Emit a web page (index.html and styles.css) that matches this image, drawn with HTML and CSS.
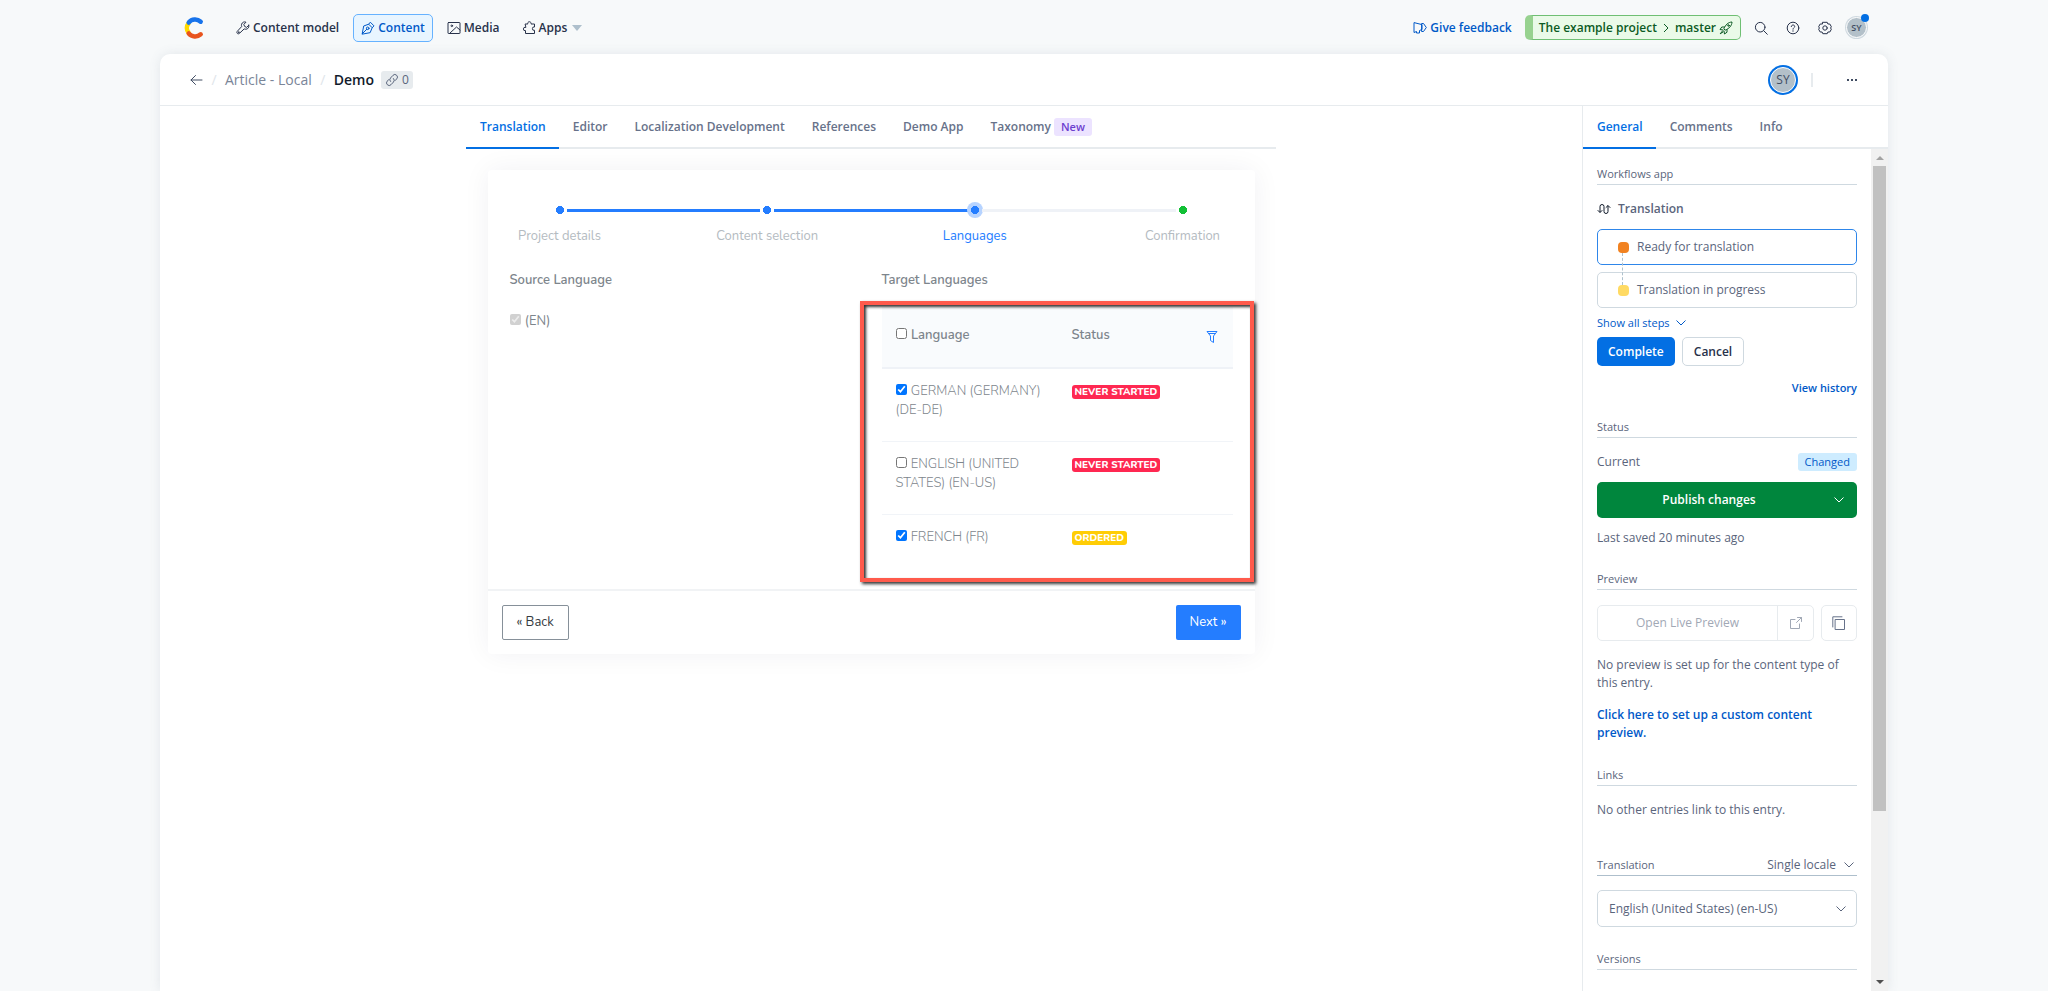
FILE: index.html
```html
<!DOCTYPE html>
<html lang="en">

<head>
    <meta charset="UTF-8">
    <meta name="viewport" content="width=device-width, initial-scale=1.0">
    <title>Demo - Content</title>
    <link rel="stylesheet" href="styles.css">
</head>

<body>
    <header class="topbar">
        <a class="logo" href="#" aria-label="Home">
            <svg width="22" height="24" viewBox="0 0 22 24" fill="none" stroke-width="4.500" stroke-linecap="round">
                <path d="M4.500 7.500a7 7 0 0 0 0 9" stroke="#ffda00" />
                <path d="M4.700 6.500a8.500 8.500 0 0 1 12-.8" stroke="#1773eb" />
                <path d="M4.700 17.500a8.500 8.500 0 0 0 12 .8" stroke="#e8541e" />
            </svg>
        </a>
        <nav class="main-nav">
            <a href="#">
                <svg class="icon" viewBox="0 0 14 14"><path d="M12.800 4.200 10.600 6.400 8.600 5.400 7.800 3.400 10 1.200C8.200.5 6.200 1.200 5.600 3.200c-.3.900-.2 1.700.1 2.300L1.400 10.200c-.7.800-.7 1.600-.1 2.200s1.500.6 2.200-.1l4.700-4.400c2.600 1.100 5.400-.8 4.600-3.700z" /><circle cx="2.700" cy="11.200" r=".4" /></svg>
                Content model
            </a>
            <a class="active" href="#">
                <svg class="icon" viewBox="0 0 14 14"><path d="M1.200 12.800 2.700 5l5-1.800 3.500 3.500L9.300 11.300zM1.200 12.800 5.800 8.200M7.700 3.200 9.300 1.200l3.700 3.700-1.800 1.800" /><circle cx="6.700" cy="7.300" r="1.300" /></svg>
                Content
            </a>
            <a href="#">
                <svg class="icon" viewBox="0 0 14 14"><rect x="1" y="1.500" width="12" height="11" rx=".5" /><path d="M2.500 12.500 9.500 6l3.500 3" /><circle cx="4.800" cy="4.800" r=".8" /></svg>
                Media
            </a>
            <a href="#">
                <svg class="icon" viewBox="0 0 14 14"><path d="M3.500 3h2.300a1.700 1.700 0 1 1 3.200 0h3.500v3a1.700 1.700 0 1 0 0 3.300v3.200h-9V9.600a1.700 1.700 0 1 1 0-3.300z" /></svg>
                Apps
                <svg class="caret" viewBox="0 0 10 6"><path d="M0 0h10L5 6z" /></svg>
            </a>
        </nav>
        <div class="top-actions">
            <a class="feedback" href="#">
                <svg class="icon" viewBox="0 0 14 14"><path d="M1 2v9.500l2.500-1V12h3V9.500l2.500-1V4zM9 2.500h1.500l2.800 4-2.800 4H9z" /></svg>
                Give feedback
            </a>
            <button class="project" type="button">
                <span>The example project</span>
                <svg class="chevron-right" viewBox="0 0 6 10"><path d="m1 1 4 4-4 4" /></svg>
                <span class="branch">
                    master
                    <svg class="icon" viewBox="0 0 14 14"><path d="M5 7.500C6.500 4 9 1.200 13 1c-.2 4-3 6.500-6.500 8zM5.500 6H2.800L1 8.500l3 .5M8 8.500v2.700L5.500 13 5 10M3.500 10 1.200 12.800 4 11" /><circle cx="9.500" cy="4.500" r=".8" /></svg>
                </span>
            </button>
            <div class="top-icons">
                <button class="icon-btn" type="button" aria-label="Search">
                    <svg class="icon" viewBox="0 0 14 14"><circle cx="6.200" cy="6.200" r="4.800" /><path d="m9.800 9.800 3.500 3.500" /></svg>
                </button>
                <button class="icon-btn" type="button" aria-label="Help">
                    <svg class="icon" viewBox="0 0 14 14"><circle cx="7" cy="7" r="5.800" /><path d="M5.300 5.600C5.500 4.500 6.200 4 7 4c1 0 1.700.6 1.700 1.500C8.700 6.700 7 6.700 7 8.200M7 9.700v.6" /></svg>
                </button>
                <button class="icon-btn" type="button" aria-label="Settings">
                    <svg class="icon" viewBox="0 0 14 14"><path d="M4.800 1.300h4.400l.7 1.700h1.900l1.600 2.800L12.500 7l.9 1.200-1.600 2.800H9.900l-.7 1.700H4.800L4.100 11H2.200L.6 8.200 1.500 7 .6 5.800 2.200 3h1.900z" /><circle cx="7" cy="7" r="2.200" /></svg>
                </button>
                <button class="avatar avatar-small" type="button">SY<span class="dot"></span></button>
            </div>
        </div>
    </header>

    <div class="panel">
        <div class="entry-header">
            <a class="back-arrow" href="#" aria-label="Go back">
                <svg class="icon" viewBox="0 0 14 14"><path d="M13 7H2M6.500 2.500 2 7l4.500 4.500" /></svg>
            </a>
            <span class="slash">/</span>
            <a class="crumb" href="#">Article - Local</a>
            <span class="slash">/</span>
            <h1>Demo</h1>
            <span class="link-count">
                <svg class="icon" viewBox="0 0 14 14"><path d="M5.500 8.500a2.500 2.500 0 0 1 0-3.500L8 2.300a2.500 2.500 0 0 1 3.700 3.600l-1.500 1.600M8.500 5.500a2.500 2.500 0 0 1 0 3.500L6 11.700a2.500 2.500 0 0 1-3.700-3.600l1.500-1.600" /></svg>
                0
            </span>
            <div class="entry-actions">
                <span class="avatar avatar-ring">SY</span>
                <span class="divider"></span>
                <button class="icon-btn" type="button" aria-label="More actions">
                    <svg class="more" viewBox="0 0 10 2"><path d="M0 0h2v2H0zM4 0h2v2H4zM8 0h2v2H8z" /></svg>
                </button>
            </div>
        </div>

        <div class="entry-body">
            <main>
                <nav class="tabs editor-tabs">
                    <a class="active" href="#">Translation</a>
                    <a href="#">Editor</a>
                    <a href="#">Localization Development</a>
                    <a href="#">References</a>
                    <a href="#">Demo App</a>
                    <a href="#">Taxonomy <span class="new-badge">New</span></a>
                </nav>

                <section class="wizard">
                    <div class="track">
                        <span class="step-dot"></span>
                        <span class="line done"></span>
                        <span class="step-dot"></span>
                        <span class="line done"></span>
                        <span class="step-dot current"></span>
                        <span class="line"></span>
                        <span class="step-dot final"></span>
                    </div>
                    <ol class="step-labels">
                        <li>Project details</li>
                        <li>Content selection</li>
                        <li class="current">Languages</li>
                        <li>Confirmation</li>
                    </ol>

                    <div class="languages">
                        <div class="source">
                            <h2>Source Language</h2>
                            <label class="source-lang"><input type="checkbox" checked disabled> (EN)</label>
                        </div>
                        <div class="target">
                            <h2>Target Languages</h2>
                            <div class="table-wrap">
                                <table>
                                    <thead>
                                        <tr>
                                            <th class="col-lang"><label><input type="checkbox"> Language</label></th>
                                            <th>Status</th>
                                            <th class="col-filter">
                                                <button type="button" aria-label="Filter">
                                                    <svg width="12" height="14" viewBox="0 0 12 14"><path d="M1 1.500h10L7.500 6v6.500l-3-2V6zM2.500 3.500h7" /></svg>
                                                </button>
                                            </th>
                                        </tr>
                                    </thead>
                                    <tbody>
                                        <tr>
                                            <td><label><input type="checkbox" checked> GERMAN (GERMANY) (DE-DE)</label></td>
                                            <td colspan="2"><span class="status never">NEVER STARTED</span></td>
                                        </tr>
                                        <tr>
                                            <td><label><input type="checkbox"> ENGLISH (UNITED STATES) (EN-US)</label></td>
                                            <td colspan="2"><span class="status never">NEVER STARTED</span></td>
                                        </tr>
                                        <tr>
                                            <td><label><input type="checkbox" checked> FRENCH (FR)</label></td>
                                            <td colspan="2"><span class="status ordered">ORDERED</span></td>
                                        </tr>
                                    </tbody>
                                </table>
                                <div class="highlight"></div>
                            </div>
                        </div>
                    </div>

                    <div class="wizard-footer">
                        <button class="back" type="button">« Back</button>
                        <button class="next" type="button">Next »</button>
                    </div>
                </section>
            </main>

            <aside>
                <nav class="tabs side-tabs">
                    <a class="active" href="#">General</a>
                    <a href="#">Comments</a>
                    <a href="#">Info</a>
                </nav>
                <div class="side-scroll">
                    <div class="side-content">
                        <h3>Workflows app</h3>
                        <div class="workflow-name">
                            <svg class="icon" viewBox="0 0 14 14"><path d="M1 8.500l2 2 2-2M3 10V4.500a2 2 0 0 1 4 0v5a2 2 0 0 0 4 0V4M9 5.500l2-2 2 2" /></svg>
                            Translation
                        </div>
                        <div class="workflow-step current"><span class="marker orange"></span>Ready for translation</div>
                        <div class="workflow-step"><span class="marker yellow"></span>Translation in progress</div>
                        <a class="show-all" href="#">Show all steps <svg class="chevron" viewBox="0 0 10 6"><path d="m.500.500 4.500 4.500L9.500.500" /></svg></a>
                        <div class="workflow-buttons">
                            <button class="complete" type="button">Complete</button>
                            <button class="cancel" type="button">Cancel</button>
                        </div>
                        <a class="history" href="#">View history</a>

                        <h3>Status</h3>
                        <div class="status-row">Current <span class="changed">Changed</span></div>
                        <div class="publish">
                            <button type="button">Publish changes</button>
                            <button class="publish-more" type="button" aria-label="More publish options"><svg class="chevron" viewBox="0 0 10 6"><path d="m.500.500 4.500 4.500L9.500.500" /></svg></button>
                        </div>
                        <p class="saved">Last saved 20 minutes ago</p>

                        <h3>Preview</h3>
                        <div class="preview-row">
                            <div class="preview-group">
                                <button type="button" disabled>Open Live Preview</button>
                                <button class="square" type="button" disabled aria-label="Open in new tab"><svg class="icon" viewBox="0 0 14 14"><path d="M6 3.500H1.500v9h9V8M8.500 1.500h4v4M12.500 1.500l-5 5" /></svg></button>
                            </div>
                            <button class="square copy" type="button" aria-label="Copy link"><svg class="icon" viewBox="0 0 14 14"><path d="M.8 11V.8H10M3.500 3.500h9v10h-9z" /></svg></button>
                        </div>
                        <p class="no-preview">No preview is set up for the content type of this entry.</p>
                        <a class="setup" href="#">Click here to set up a custom content preview.</a>

                        <h3>Links</h3>
                        <p class="no-links">No other entries link to this entry.</p>

                        <div class="side-heading">
                            <h3>Translation</h3>
                            <button class="locale-mode" type="button">Single locale <svg class="chevron" viewBox="0 0 10 6"><path d="m.500.500 4.500 4.500L9.500.500" /></svg></button>
                        </div>
                        <div class="select-wrap">
                            <select aria-label="Locale">
                                <option>English (United States) (en-US)</option>
                            </select>
                            <svg class="chevron" viewBox="0 0 10 6"><path d="m.500.500 4.500 4.500L9.500.500" /></svg>
                        </div>

                        <h3>Versions</h3>
                    </div>
                    <div class="scrollbar">
                        <svg width="8" height="4" viewBox="0 0 8 4"><path d="M0 4 4 0l4 4z" fill="#a3a3a3" /></svg>
                        <div class="thumb"></div>
                        <svg width="8" height="4" viewBox="0 0 8 4"><path d="M0 0h8L4 4z" fill="#505050" /></svg>
                    </div>
                </div>
            </aside>
        </div>
    </div>
</body>

</html>
```

FILE: styles.css
```css
* {
    box-sizing: border-box;
}

body {
    margin: 0;
    height: 100vh;
    display: flex;
    flex-direction: column;
    overflow: hidden;
    background: #f7f9fa;
    color: #5a657c;
    font-family: "Segoe UI", "Open Sans", "Noto Sans", sans-serif;
    font-size: 12px;
    line-height: 18px;
}

a {
    color: inherit;
    text-decoration: none;
}

button {
    font: inherit;
    color: inherit;
    border: none;
    background: none;
    padding: 0;
    cursor: pointer;
}

h1,
h2,
h3,
p {
    margin: 0;
}

svg {
    flex: none;
}

.icon {
    width: 14px;
    height: 14px;
    fill: none;
    stroke: currentColor;
    stroke-linejoin: round;
    stroke-linecap: round;
}

.chevron {
    width: 10px;
    height: 6px;
    fill: none;
    stroke: currentColor;
    overflow: visible;
}

/* Top bar */
.topbar {
    width: 100%;
    max-width: 1728px;
    height: 54px;
    margin: 0 auto;
    padding: 1px 21px 0 24px;
    display: flex;
    align-items: center;
    color: #28324a;
    font-weight: 600;
}

.logo {
    display: flex;
    margin-right: 22px;
}

.main-nav {
    display: flex;
}

.main-nav a {
    display: flex;
    align-items: center;
    gap: 3px;
    height: 28px;
    margin-right: 6px;
    padding: 0 7px;
    border: 1px solid transparent;
    border-radius: 5px;
}

.main-nav a.active {
    background: #e8f5ff;
    border-color: #66b2ff;
    color: #0059c8;
}

.caret {
    width: 10px;
    height: 6px;
    margin-left: 2px;
    fill: #aebfcc;
}

.top-actions {
    display: flex;
    align-items: center;
    gap: 13px;
    margin-left: auto;
}

.feedback {
    display: flex;
    align-items: center;
    gap: 3px;
    color: #0059c8;
}

.project {
    display: flex;
    align-items: center;
    gap: 6px;
    height: 25px;
    padding: 0 7px 0 6px;
    border: 1px solid #6fbf73;
    border-left: 8px solid #97d28f;
    border-radius: 5px;
    background: #eafae8;
    color: #0c5a24;
    font-weight: 600;
}

.branch {
    display: flex;
    align-items: center;
    gap: 3px;
}

.chevron-right {
    width: 6px;
    height: 10px;
    fill: none;
    stroke: currentColor;
}

.top-icons {
    display: flex;
    align-items: center;
    gap: 18px;
}

.icon-btn {
    display: flex;
    align-items: center;
}

.avatar {
    position: relative;
    display: flex;
    align-items: center;
    justify-content: center;
    border-radius: 50%;
    background: #b3c0c9;
    color: #414d63;
    border: 1px solid #fff;
}

.avatar-small {
    width: 21px;
    height: 21px;
    margin-left: -4px;
    font-size: 9px;
    box-shadow: 0 0 0 1px #cfd9e0;
}

.avatar-ring {
    width: 26px;
    height: 26px;
    box-shadow: 0 0 0 2px #036fe3;
}

.dot {
    position: absolute;
    top: -4px;
    right: -3px;
    width: 8px;
    height: 8px;
    border-radius: 50%;
    background: #036fe3;
}

/* Entry panel */
.panel {
    width: 100%;
    max-width: 1728px;
    flex: 1;
    min-height: 0;
    margin: 0 auto;
    display: flex;
    flex-direction: column;
    background: #fff;
    border-radius: 10px 10px 0 0;
    box-shadow: 0 0 12px rgba(80, 100, 120, 0.12);
}

.entry-header {
    display: flex;
    align-items: center;
    height: 52px;
    padding: 0 31px 0 29px;
    border-bottom: 1px solid #e7ebee;
}

.back-arrow {
    display: flex;
    color: #414d63;
}

.slash {
    width: 22px;
    text-align: center;
    color: #e0e5ea;
    font-size: 14px;
}

.crumb {
    font-size: 14px;
    color: #7a8598;
}

.entry-header h1 {
    font-size: 14px;
    font-weight: 600;
    color: #111b2b;
}

.link-count {
    display: flex;
    align-items: center;
    gap: 3px;
    height: 18px;
    margin-left: 7px;
    padding: 0 4px;
    border-radius: 3px;
    background: #e7ebee;
}

.entry-actions {
    display: flex;
    align-items: center;
    margin-left: auto;
}

.divider {
    width: 2px;
    height: 14px;
    margin: 0 34px 0 15px;
    background: #e7ebee;
}

.more {
    width: 10px;
    height: 2px;
    fill: #414d63;
}

.entry-body {
    display: flex;
    flex: 1;
    min-height: 0;
}

main {
    flex: 1;
    padding: 0 24px;
}

/* Tabs */
.tabs {
    display: flex;
    height: 43px;
    border-bottom: 2px solid #e7ebee;
    font-weight: 600;
    color: #67728a;
}

.tabs a {
    display: flex;
    align-items: center;
    gap: 3px;
    height: 43px;
    padding: 0 13px 0 14px;
    border-bottom: 2px solid transparent;
}

.tabs a.active {
    color: #036fe3;
    border-color: #036fe3;
}

.editor-tabs {
    max-width: 810px;
    margin: 0 auto;
}

.new-badge {
    padding: 0 7px;
    border-radius: 3px;
    background: #ece3ff;
    color: #6c3ecf;
    font-size: 11px;
}

/* Translation wizard */
.wizard {
    max-width: 767px;
    margin: 21px auto 0;
    border-radius: 4px;
    box-shadow: 0 0 28px rgba(8, 21, 66, 0.06);
    font-family: Nunito, Lato, "Open Sans", sans-serif;
    font-size: 13px;
    line-height: 19px;
    color: #7d858c;
}

.track {
    display: flex;
    align-items: center;
    padding: 32px 68px 0;
    gap: 3px;
}

.step-dot {
    width: 8px;
    height: 16px;
    background: radial-gradient(circle, #247dff 4px, transparent 4px);
}

.step-dot.current {
    width: 16px;
    margin: 0 -4px;
    border-radius: 50%;
    background: radial-gradient(circle, #247dff 4px, #b6d3ff 4px);
}

.step-dot.final {
    background: radial-gradient(circle, #12c035 4px, transparent 4px);
}

.line {
    flex: 1;
    height: 3px;
    background: #eff2f7;
}

.line.done {
    background: #247dff;
}

.step-labels {
    display: flex;
    justify-content: space-between;
    margin: 0;
    padding: 9px 34px 0;
    list-style: none;
    color: #b4bbc1;
}

.step-labels li {
    display: flex;
    justify-content: center;
    width: 76px;
    white-space: nowrap;
}

.step-labels .current {
    color: #247dff;
}

.languages {
    display: flex;
    padding: 25px 22px 2px;
}

.source,
.target {
    flex: 1;
}

.source {
    margin-right: 21px;
}

.languages h2 {
    font-size: 13px;
    line-height: 19px;
    font-weight: 600;
}

.languages input {
    width: 11px;
    height: 11px;
    margin: 0 1px 0 0;
    accent-color: #0075ff;
}

.source-lang {
    display: block;
    margin-top: 22px;
}

.table-wrap {
    position: relative;
    margin-top: 17px;
}

table {
    width: 100%;
    border-collapse: collapse;
    table-layout: fixed;
}

th,
td {
    padding: 13px 14px 20px;
    text-align: left;
    vertical-align: top;
}

thead tr {
    height: 61px;
    background: #f9fbfd;
    border-bottom: 2px solid #eff2f7;
}

th {
    font-weight: 600;
    padding-top: 19px;
    padding-bottom: 12px;
}

td {
    height: 73px;
    border-bottom: 1px solid #f1f4f8;
    font-weight: 300;
}

tbody tr:last-child td {
    border-bottom: none;
}

.col-lang {
    width: 176px;
}

.col-filter {
    width: 41px;
}

.col-filter svg {
    display: block;
    margin-top: 4px;
    fill: none;
    stroke: #247dff;
}

.status {
    display: inline-block;
    padding: 0 3px;
    border-radius: 3px;
    color: #fff;
    font-size: 10px;
    font-weight: 800;
    line-height: 14px;
}

.status.never {
    background: #ff2851;
}

.status.ordered {
    background: #ffcd05;
}

/* Red frame drawn around the target language table */
.highlight {
    position: absolute;
    inset: -6px -21px 5px -22px;
    border: 4px solid #ff5a4c;
    box-shadow: 2px 2px 3px rgba(0, 0, 0, 0.8), inset 2px 2px 3px rgba(0, 0, 0, 0.8);
    pointer-events: none;
}

.wizard-footer {
    display: flex;
    justify-content: space-between;
    padding: 14px;
    border-top: 2px solid #f1f3f5;
}

.wizard-footer button {
    height: 35px;
    padding: 0 14px;
    border-radius: 2px;
}

.wizard-footer .back {
    border: 1px solid #869099;
    color: #343a40;
}

.wizard-footer .next {
    background: #247dff;
    color: #fff;
}

/* Sidebar */
aside {
    display: flex;
    flex-direction: column;
    width: 306px;
    border-left: 1px solid #e7ebee;
}

.side-tabs {
    flex: none;
}

.side-scroll {
    display: flex;
    flex: 1;
    min-height: 0;
}

.side-content {
    flex: 1;
    padding: 16px 14px 0;
    overflow: hidden;
}

.side-content h3 {
    height: 20px;
    margin-bottom: 15px;
    border-bottom: 1px solid #cfd9e0;
    font-size: 11px;
    font-weight: 500;
    color: #5a657c;
}

.workflow-name {
    display: flex;
    align-items: center;
    gap: 7px;
    font-size: 12px;
    font-weight: 600;
    margin-bottom: 11px;
}

.workflow-name .icon {
    stroke: #111b2b;
}

.workflow-step {
    display: flex;
    align-items: center;
    gap: 8px;
    height: 36px;
    margin-bottom: 7px;
    padding-left: 20px;
    border: 1px solid #cfd9e0;
    border-radius: 5px;
}

.workflow-step.current {
    border-color: #2e86ea;
}

.marker {
    position: relative;
    width: 11px;
    height: 11px;
    border-radius: 4px;
}

.orange {
    background: #f18221;
}

.yellow {
    background: #ffda63;
}

/* dashed connector to the next step */
.orange::after {
    content: "";
    position: absolute;
    top: 11px;
    left: 4px;
    height: 32px;
    border-left: 1px dashed #aec1cc;
}

.show-all {
    display: flex;
    align-items: center;
    gap: 6px;
    height: 16px;
    margin-bottom: 6px;
    color: #0059c8;
    font-size: 11px;
}

.workflow-buttons {
    display: flex;
    gap: 7px;
}

.workflow-buttons button {
    height: 29px;
    padding: 0 11px;
    border-radius: 5px;
    font-weight: 600;
}

.workflow-buttons .complete {
    background: #036fe3;
    color: #fff;
}

.workflow-buttons .cancel {
    border: 1px solid #cfd9e0;
    color: #28324a;
}

.history {
    display: block;
    margin: 13px 0 21px;
    text-align: right;
    color: #0059c8;
    font-size: 11px;
    font-weight: 600;
}

.status-row {
    display: flex;
    justify-content: space-between;
    margin-bottom: 11px;
}

.changed {
    padding: 0 7px;
    border-radius: 3px;
    background: #ceecff;
    color: #0059c8;
    font-size: 11px;
    font-weight: 500;
}

.publish {
    display: flex;
    height: 36px;
    border-radius: 5px;
    background: #00863d;
    color: #fff;
}

.publish button {
    flex: 1;
    font-weight: 600;
}

.publish .publish-more {
    display: flex;
    flex: none;
    align-items: center;
    justify-content: center;
    width: 36px;
}

.saved {
    margin: 11px 0 23px;
}

.preview-row {
    display: flex;
    gap: 7px;
    height: 36px;
}

.preview-group {
    display: flex;
    flex: 1;
    border: 1px solid #e7ebee;
    border-radius: 5px;
    color: #a1a8b5;
}

.preview-group button {
    flex: 1;
    font-weight: 500;
}

.preview-row .square {
    display: flex;
    flex: none;
    align-items: center;
    justify-content: center;
    width: 36px;
}

.preview-group .square {
    border-left: 1px solid #e7ebee;
}

.preview-row .copy {
    border: 1px solid #e7ebee;
    border-radius: 5px;
    color: #67728a;
}

.no-preview {
    margin: 15px 0 14px;
}

.setup {
    display: block;
    margin-bottom: 24px;
    color: #0059c8;
    font-weight: 600;
}

.no-links {
    margin-bottom: 37px;
}

.side-heading {
    display: flex;
    justify-content: space-between;
    height: 20px;
    margin-bottom: 14px;
    border-bottom: 1px solid #aebfcc;
}

.side-heading h3 {
    border: none;
    margin: 0;
}

.locale-mode {
    display: flex;
    align-items: center;
    gap: 8px;
    height: 18px;
    padding-right: 3px;
}

.select-wrap {
    display: flex;
    align-items: center;
    height: 37px;
    margin-bottom: 23px;
    padding-right: 10px;
    border: 1px solid #cfd9e0;
    border-radius: 5px;
}

select {
    flex: 1;
    height: 100%;
    padding: 0 0 0 11px;
    appearance: none;
    border: none;
    background: none;
    font: inherit;
    color: inherit;
}

.scrollbar {
    display: flex;
    flex-direction: column;
    align-items: center;
    width: 17px;
    padding: 7px 0;
    background: #f1f1f1;
}

.scrollbar .thumb {
    width: 13px;
    height: 645px;
    margin: 6px 0 auto;
    background: #c1c1c1;
}
```
